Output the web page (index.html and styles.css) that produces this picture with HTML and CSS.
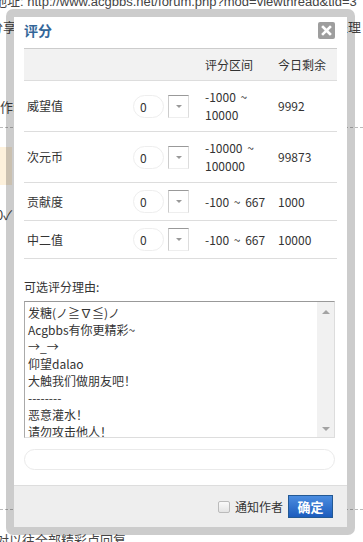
FILE: index.html
```html
<!DOCTYPE html>
<html lang="zh-CN">
<head>
    <meta charset="UTF-8">
    <meta name="viewport" content="width=device-width, initial-scale=1.0">
    <title>评分</title>
    <link rel="stylesheet" href="styles.css">
</head>
<body>
    <div class="page">
        <div class="url">地址: http://www.acgbbs.net/forum.php?mod=viewthread&amp;tid=3</div>
        <div class="bg-row r1"><span class="cut">分享</span><span>处理</span></div>
        <div class="bg-row r2"><span class="cut">操作:</span></div>
        <div class="bg-dash"></div>
        <div class="bg-note"></div>
        <div class="bg-row r3"><span class="cut2">0✓</span></div>
        <div class="bg-dash low"></div>
        <div class="bg-foot">对以往全部精彩点回复</div>
    </div>

    <div class="dialog">
        <div class="dlg-head">
            <h3>评分</h3>
            <span class="close">
                <svg width="11" height="11" viewBox="0 0 11 11"><path d="M2 2 L9 9 M9 2 L2 9" stroke="#fff" stroke-width="2.6" stroke-linecap="square"/></svg>
            </span>
        </div>

        <div class="dlg-body">
            <table class="rate">
                <tr class="head">
                    <td class="c-name"></td>
                    <td class="c-sel"></td>
                    <td class="c-range">评分区间</td>
                    <td class="c-left">今日剩余</td>
                </tr>
                <tr>
                    <td class="c-name">威望值</td>
                    <td class="c-sel"><span class="sel"><span class="pill">0</span><span class="drop"></span></span></td>
                    <td class="c-range">-1000 ~ 10000</td>
                    <td class="c-left">9992</td>
                </tr>
                <tr>
                    <td class="c-name">次元币</td>
                    <td class="c-sel"><span class="sel"><span class="pill">0</span><span class="drop"></span></span></td>
                    <td class="c-range">-10000 ~ 100000</td>
                    <td class="c-left">99873</td>
                </tr>
                <tr>
                    <td class="c-name">贡献度</td>
                    <td class="c-sel"><span class="sel"><span class="pill">0</span><span class="drop"></span></span></td>
                    <td class="c-range nowrap">-100 ~ 667</td>
                    <td class="c-left">1000</td>
                </tr>
                <tr>
                    <td class="c-name">中二值</td>
                    <td class="c-sel"><span class="sel"><span class="pill">0</span><span class="drop"></span></span></td>
                    <td class="c-range nowrap">-100 ~ 667</td>
                    <td class="c-left">10000</td>
                </tr>
            </table>

            <p class="reason-label">可选评分理由:</p>
            <div class="reasons">
                <div class="list">
                    <div>发糖(ノ≧∇≦)ノ</div>
                    <div>Acgbbs有你更精彩~</div>
                    <div>→_→</div>
                    <div>仰望dalao</div>
                    <div>大触我们做朋友吧！</div>
                    <div>--------</div>
                    <div>恶意灌水！</div>
                    <div>请勿攻击他人！</div>
                </div>
                <div class="sbar"><span class="up"></span><span class="down"></span></div>
            </div>
            <div class="reason-input"></div>
        </div>

        <div class="dlg-foot">
            <label class="notify"><span class="cb"></span>通知作者</label>
            <button class="ok">确定</button>
        </div>
    </div>
</body>
</html>
```

FILE: styles.css
```css
* {
    margin: 0;
    padding: 0;
    box-sizing: border-box;
}

body {
    background-color: #fff;
    font-family: "Noto Sans CJK SC", "Liberation Sans", sans-serif;
    font-size: 12px;
    color: #333;
    width: 363px;
    height: 542px;
    overflow: hidden;
    position: relative;
}

/* página por trás */
.page {
    color: #444;
    font-size: 13px;
}

.url {
    font-family: "Liberation Sans", "Noto Sans CJK SC", sans-serif;
    font-size: 13px;
    line-height: 16px;
    margin-top: -6px;
    margin-left: -6px;
    white-space: nowrap;
}

.bg-row {
    display: flex;
    justify-content: space-between;
    line-height: 16px;
}

.bg-row.r1 {
    margin-top: 9px;
    margin-right: 2px;
}

.bg-row.r2 {
    margin-top: 64px;
}

.cut {
    margin-left: -10px;
}

.bg-row.r2 .cut {
    margin-left: -13px;
}

.cut2 {
    margin-left: -4px;
}

.bg-dash {
    border-top: 1px dashed #bbb;
    margin-top: 12px;
}

.bg-note {
    height: 38px;
    margin-top: 19px;
    width: 12px;
    background: #fdf1dc;
}

.bg-row.r3 {
    margin-top: 22px;
}

.bg-dash.low {
    margin-top: 286px;
}

.bg-foot {
    margin-top: 22px;
    margin-left: -4px;
    line-height: 16px;
}

/* janela de avaliação */
.dialog {
    position: absolute;
    left: 6px;
    top: 9px;
    width: 349px;
    height: 526px;
    border: 8px solid rgba(0, 0, 0, 0.2);
    border-radius: 7px;
    background: #fff;
    background-clip: padding-box;
    display: flex;
    flex-direction: column;
}

.dlg-head {
    display: flex;
    justify-content: space-between;
    align-items: center;
    padding: 3px 12px 8px 10px;
    height: 31px;
    flex-shrink: 0;
}

.dlg-head h3 {
    font-size: 14px;
    line-height: 20px;
    color: #369;
    font-weight: bold;
}

.close {
    width: 17px;
    height: 17px;
    background: #9e9e9e;
    border-radius: 2px;
    display: flex;
    align-items: center;
    justify-content: center;
}

.dlg-body {
    padding: 0 10px;
    flex: 1;
}

.rate {
    width: 313px;
    border-collapse: collapse;
    table-layout: fixed;
}

.rate td {
    padding: 7px 3px;
    border-bottom: 1px solid #ddd;
    line-height: 18px;
    vertical-align: middle;
}

.rate tr.head td {
    background: #f2f2f2;
    border-top: 1px solid #ccc;
    padding: 6px 3px;
    height: 32px;
}

.c-name {
    width: 106px;
}

.c-sel {
    width: 72px;
}

.c-range {
    width: 73px;
    word-spacing: 2px;
}

.nowrap {
    white-space: nowrap;
}

.sel {
    display: flex;
    align-items: center;
    gap: 4px;
}

.pill {
    width: 31px;
    height: 23px;
    border: 1px solid #eee;
    border-radius: 12px;
    padding-left: 6px;
    line-height: 21px;
}

.drop {
    width: 21px;
    height: 23px;
    border-top: 1px solid #999;
    border-left: 1px solid #ccc;
    border-right: 1px solid #ddd;
    border-bottom: 1px solid #eee;
    display: flex;
    align-items: center;
    justify-content: center;
}

.drop::after {
    content: "";
    border-left: 3px solid transparent;
    border-right: 3px solid transparent;
    border-top: 3px solid #999;
}

.reason-label {
    margin-top: 19px;
    line-height: 18px;
}

.reasons {
    margin-top: 5px;
    width: 311px;
    height: 137px;
    border-top: 1px solid #999;
    border-left: 1px solid #aaa;
    border-right: 1px solid #ddd;
    border-bottom: 1px solid #ddd;
    display: flex;
}

.list {
    flex: 1;
    padding: 2px 0 0 3px;
    line-height: 17px;
    overflow: hidden;
    color: #333;
}

.sbar {
    width: 17px;
    background: #f1f1f1;
    display: flex;
    flex-direction: column;
    justify-content: space-between;
    align-items: center;
    padding: 8px 0 6px;
}

.up {
    border-left: 4px solid transparent;
    border-right: 4px solid transparent;
    border-bottom: 4px solid #a3a3a3;
}

.down {
    border-left: 4px solid transparent;
    border-right: 4px solid transparent;
    border-top: 4px solid #a3a3a3;
}

.reason-input {
    margin-top: 11px;
    width: 311px;
    height: 21px;
    border: 1px solid #eaeaea;
    border-radius: 11px;
}

.dlg-foot {
    height: 42px;
    flex-shrink: 0;
    background: #eee;
    border-top: 1px solid #ddd;
    display: flex;
    justify-content: flex-end;
    align-items: center;
    padding-right: 14px;
}

.notify {
    display: flex;
    align-items: center;
    gap: 5px;
    font-size: 12px;
    color: #333;
    margin-right: 5px;
}

.cb {
    width: 12px;
    height: 12px;
    border: 1px solid #bbb;
    border-radius: 2px;
    background: linear-gradient(#fafafa, #e4e4e4);
}

.ok {
    width: 45px;
    height: 23px;
    border: 1px solid #235994;
    background: linear-gradient(#4b8de0, #1c5cbd);
    color: #fff;
    font-family: inherit;
    font-size: 13px;
    font-weight: bold;
}
```
